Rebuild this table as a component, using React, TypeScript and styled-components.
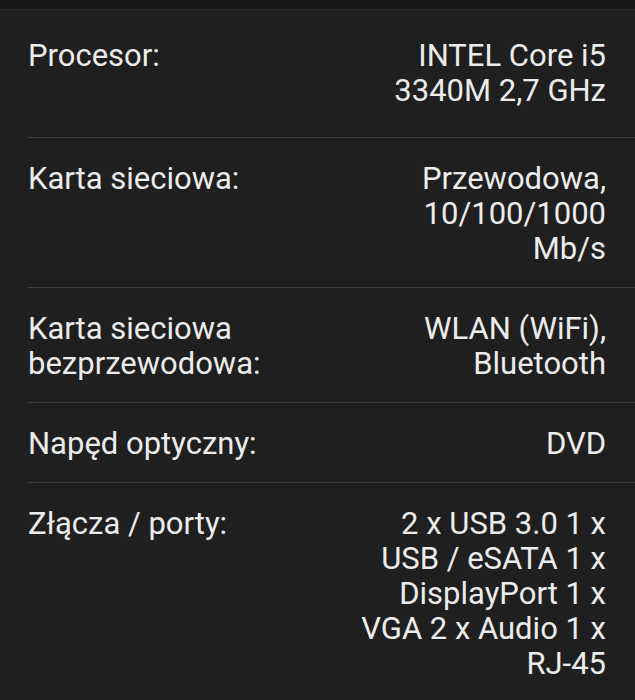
import React from "react";
import styled, { createGlobalStyle } from "styled-components";

const GlobalStyle = createGlobalStyle`
  html, body {
    margin: 0;
    padding: 0;
    background: #1f1f1f;
  }
  body {
    font-family: Roboto, "Noto Sans", "Liberation Sans", sans-serif;
    -webkit-font-smoothing: antialiased;
  }
`;

const Page = styled.div`
  width: 635px;
  min-height: 700px;
  background: #1f1f1f;
  overflow: hidden;
`;

const TopBar = styled.div`
  height: 9px;
  background: #181818;
  border-bottom: 1px solid #2b2b2b;
`;

const List = styled.dl`
  margin: 0 0 0 28px;
  padding: 0;
`;

const Row = styled.div<{ $first?: boolean; $last?: boolean }>`
  display: grid;
  grid-template-columns: 1fr 252px;
  column-gap: 16px;
  padding: ${(p) => (p.$first ? "28px 29px 29px 0" : "23px 29px 21px 0")};
  border-bottom: ${(p) => (p.$last ? "none" : "1px solid #3e3e3e")};
`;

const Label = styled.dt`
  margin: 0;
  font-size: 31px;
  line-height: 35px;
  color: #ececec;
  font-weight: 400;
`;

const Value = styled.dd`
  margin: 0;
  font-size: 31px;
  line-height: 35px;
  color: #ececec;
  text-align: right;
  font-weight: 400;
`;

const specs: { label: string; value: string }[] = [
  { label: "Procesor:", value: "INTEL Core i5 3340M 2,7 GHz" },
  { label: "Karta sieciowa:", value: "Przewodowa, 10/100/1000 Mb/s" },
  { label: "Karta sieciowa bezprzewodowa:", value: "WLAN (WiFi), Bluetooth" },
  { label: "Napęd optyczny:", value: "DVD" },
  {
    label: "Złącza / porty:",
    value: "2 x USB 3.0 1 x USB / eSATA 1 x DisplayPort 1 x VGA 2 x Audio 1 x RJ-45",
  },
];

export default function App() {
  return (
    <Page>
      <GlobalStyle />
      <TopBar />
      <List>
        {specs.map((s, i) => (
          <Row key={s.label} $first={i === 0} $last={i === specs.length - 1}>
            <Label>{s.label}</Label>
            <Value>{s.value}</Value>
          </Row>
        ))}
      </List>
    </Page>
  );
}
